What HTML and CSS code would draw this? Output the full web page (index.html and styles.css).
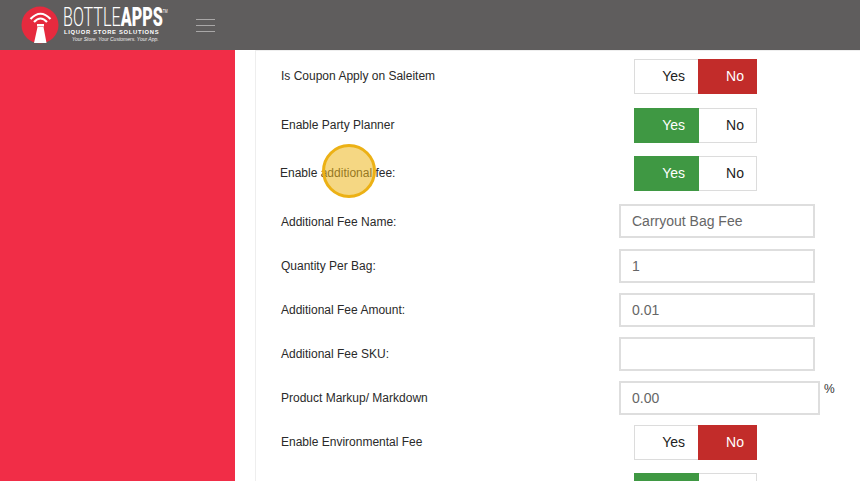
FILE: index.html
```html
<!DOCTYPE html>
<html lang="en">
<head>
<meta charset="utf-8">
<title>BottleApps settings</title>
<link rel="stylesheet" href="styles.css">
</head>
<body>
<header class="topbar">
  <div class="logo">
    <svg class="logo-mark" width="40" height="40" viewBox="0 0 40 40">
      <circle cx="20" cy="20" r="18.500" fill="#e62a3e"/>
      <path d="M10.500 14 Q20.500 3.500 30.500 14" fill="none" stroke="#fff" stroke-width="2.200"/>
      <path d="M14 17 Q20.500 10 27 17" fill="none" stroke="#fff" stroke-width="2.200"/>
      <path d="M17 19 H24 V21.500 H17 Z" fill="#fff"/>
      <path d="M17.500 22 H23.500 L26.500 38 H14 Z" fill="#fff"/>
    </svg>
    <div class="logo-text">
      <div class="logo-name"><span class="logo-thin">BOTTLE</span><span class="logo-bold">APPS</span><sup class="logo-tm">TM</sup></div>
      <div class="logo-sub">LIQUOR STORE SOLUTIONS</div>
      <div class="logo-tag">Your Store. Your Customers. Your App.</div>
    </div>
  </div>
  <div class="burger"><i></i><i></i><i></i></div>
</header>
<div class="main">
  <aside class="sidebar"></aside>
  <section class="content">
    <div class="row row-toggle first">
      <label class="label">Is Coupon Apply on Saleitem</label>
      <div class="toggle off"><span class="yes">Yes</span><span class="no">No</span></div>
    </div>
    <div class="row row-toggle">
      <label class="label">Enable Party Planner</label>
      <div class="toggle on"><span class="yes">Yes</span><span class="no">No</span></div>
    </div>
    <div class="row row-toggle">
      <label class="label shifted">Enable additional fee:</label>
      <div class="toggle on"><span class="yes">Yes</span><span class="no">No</span></div>
    </div>
    <div class="row row-input first-input">
      <label class="label">Additional Fee Name:</label>
      <input class="field" value="Carryout Bag Fee">
    </div>
    <div class="row row-input">
      <label class="label">Quantity Per Bag:</label>
      <input class="field" value="1">
    </div>
    <div class="row row-input">
      <label class="label">Additional Fee Amount:</label>
      <input class="field" value="0.01">
    </div>
    <div class="row row-input">
      <label class="label">Additional Fee SKU:</label>
      <input class="field" value="">
    </div>
    <div class="row row-input">
      <label class="label">Product Markup/ Markdown</label>
      <input class="field wide" value="0.00"><span class="percent">%</span>
    </div>
    <div class="row row-toggle">
      <label class="label">Enable Environmental Fee</label>
      <div class="toggle off"><span class="yes">Yes</span><span class="no">No</span></div>
    </div>
    <div class="row row-toggle">
      <label class="label"></label>
      <div class="toggle on"><span class="yes"></span><span class="no"></span></div>
    </div>
  </section>
</div>
<div class="spot"></div>
</body>
</html>
```
FILE: styles.css
```css
* { box-sizing: border-box; }
html, body { margin: 0; height: 100%; overflow: hidden; background: #fff; }
body { font-family: "Liberation Sans", Arial, sans-serif; color: #222; position: relative; }

.topbar { height: 50px; background: #5f5d5d; display: flex; align-items: center; padding-left: 20px; }
.logo { display: flex; align-items: center; width: 176px; }
.logo-mark { flex: none; }
.logo-text { margin-left: 3px; color: #fff; }
.logo-name { font-family: "Roboto", "Liberation Sans", sans-serif; font-size: 25px; line-height: 21px; height: 21px; white-space: nowrap; transform: scaleX(.645); transform-origin: left; }
.logo-thin { font-weight: 300; }
.logo-bold { font-weight: 900; }
.logo-tm { font-size: 5px; vertical-align: 13px; line-height: 0; }
.logo-sub { font-size: 5.800px; font-weight: 700; letter-spacing: .72px; line-height: 8px; margin-left: 1px; white-space: nowrap; }
.logo-tag { font-style: italic; font-size: 5px; line-height: 7px; margin-left: 9px; white-space: nowrap; color: #eee; }
.burger { display: flex; flex-direction: column; gap: 5px; width: 19px; }
.burger i { display: block; height: 1px; background: #a9a7a7; }

.main { display: flex; height: 431px; overflow: hidden; }
.sidebar { width: 235px; flex: none; background: #f12d47; }
.content { flex: 1; margin-left: 20px; border-left: 1px solid #eeeeee; border-top: 1px solid #eeeeee; padding-left: 25px; }

.row { display: flex; align-items: center; }
.label { font-size: 12px; width: 338px; flex: none; color: #2a2a2a; }
.shifted { margin-left: -1px; }
.row-toggle { height: 35px; margin-bottom: 13px; }
.row-toggle .label { width: 353px; padding-bottom: 2px; }
.row-toggle .shifted { width: 354px; }
.first { margin-top: 8px; margin-bottom: 14px; }
.row-input { height: 34px; margin-bottom: 10px; }
.first-input { margin-bottom: 11px; }
.first-input .label { padding-top: 2px; }

.toggle { width: 123px; height: 35px; display: flex; font-size: 14px; border: 1px solid #dcdcdc; background: #fff; }
.toggle span { display: block; line-height: 32px; text-align: right; padding-right: 14px; color: #222; }
.toggle .yes { width: 64px; }
.toggle .no { flex: 1; padding-right: 13px; }
.toggle.on { border-left: 0; }
.toggle.on .yes { background: #3f9843; color: #fff; width: 65px; margin: -1px 0; line-height: 34px; }
.toggle.on .no { padding-right: 12px; }
.toggle.off { border-right: 0; }
.toggle.off .no { background: #c22c2a; color: #fff; margin: -1px 0 -1px -1px; line-height: 34px; }

.field { width: 196px; height: 34px; border: 2px solid #dedede; background: #fff; padding: 0 11px; font: 14px "Liberation Sans", Arial, sans-serif; color: #666; outline: 0; display: block; }
.field.wide { width: 201px; }
.percent { font-size: 12px; align-self: flex-start; margin: 1px 0 0 4px; color: #333; }

.spot { position: absolute; left: 322px; top: 144px; width: 54px; height: 54px; border-radius: 50%; border: 3px solid #ecb115; background: rgba(236, 183, 30, .55); }
```
